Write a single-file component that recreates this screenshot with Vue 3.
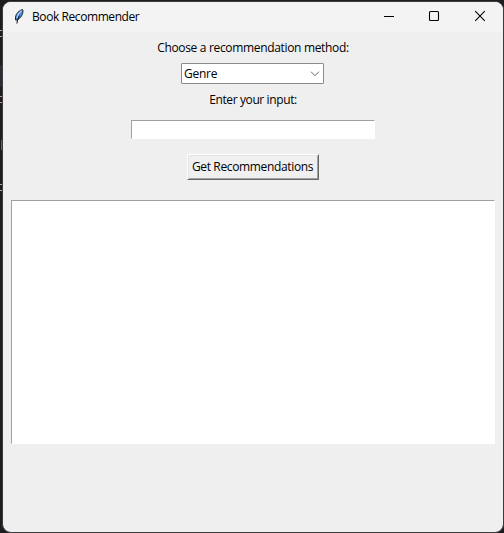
<script setup>
import { ref } from 'vue'

const method = ref('Genre')
const query = ref('')
const results = ref('')
</script>

<template>
  <div class="desktop">
    <div class="editor" aria-hidden="true">
      <i class="line"></i>
      <i class="mark m1"></i>
      <i class="mark m2"></i>
      <i class="mark m3"></i>
      <i class="mark m4"></i>
    </div>
    <main class="window">
      <header class="titlebar">
        <svg class="feather" width="12" height="17" viewBox="0 0 12 17">
          <path d="M9.5 1.5C6 2.5 3 5.5 2.5 9L2.5 12L4.5 12C8 9.5 10 6.5 10 3Z" fill="#4b8fe2" stroke="#25282e" stroke-width="1" />
          <path d="M8.5 2.5C6.2 4.5 4.6 7 3.9 9.8" stroke="#a5cdf8" stroke-width="1.2" fill="none" />
          <path d="M6.6 7.5C5.3 9.5 4.3 12 3.9 15.5" stroke="#101114" stroke-width="1" fill="none" />
        </svg>
        <h1 class="title">Book Recommender</h1>
        <nav class="controls">
          <svg width="46" height="30" viewBox="0 0 46 30"><path d="M18 14.5h10" /></svg>
          <svg width="46" height="30" viewBox="0 0 46 30"><rect x="17.5" y="9.5" width="9" height="9" rx="1" /></svg>
          <svg width="46" height="30" viewBox="0 0 46 30"><path d="M17.2 9.2l9.6 9.6M26.8 9.2l-9.6 9.6" /></svg>
        </nav>
      </header>
      <section class="form">
        <p class="label choose">Choose a recommendation method:</p>
        <div class="combo">
          <span class="genre">{{ method }}</span>
          <svg width="10" height="6" viewBox="0 0 10 6"><path d="M1 .7L5 4.7L9 .7" /></svg>
        </div>
        <p class="label enter">Enter your input:</p>
        <input v-model="query" class="entry" type="text" />
        <button class="submit" type="button"><span>Get Recommendations</span></button>
        <textarea v-model="results" class="results"></textarea>
      </section>
    </main>
  </div>
</template>

<style>
body {
  margin: 0;
}
</style>

<style scoped>
.desktop {
  position: relative;
  box-sizing: border-box;
  width: 504px;
  height: 533px;
  padding: 1px 0 0 2px;
  overflow: hidden;
  background: #1e1c1e;
  color: #000;
  font-family: "Open Sans", "Noto Sans", sans-serif;
  font-size: 12px;
}
.editor {
  position: absolute;
  inset: 0 auto 0 0;
  width: 3px;
}
.mark {
  position: absolute;
  box-sizing: border-box;
  left: 0;
  width: 2px;
  height: 7px;
  border: solid #a9a9ab;
  border-width: 1px 0;
}
.m1 { top: 30px; }
.m2 { top: 96px; border-color: #b99b80; }
.m3 { top: 140px; left: 1px; width: 1px; height: 10px; border: 0; background: #2f7185; }
.m4 { top: 184px; }
.line {
  position: absolute;
  top: 65px;
  left: 0;
  width: 2px;
  height: 22px;
  background: #2d2b34;
}
.window {
  position: relative;
  box-sizing: border-box;
  width: 502px;
  height: 532px;
  overflow: hidden;
  border: 1px solid #3b3b3d;
  border-radius: 9px;
  background: #efefef;
}
.titlebar {
  display: flex;
  height: 30px;
  background: #f3f3f3;
}
.feather {
  margin: 6px 0 0 10px;
}
.title {
  margin: 0 0 0 7px;
  font-size: 12px;
  font-weight: 400;
  line-height: 30px;
  letter-spacing: -0.42px;
  white-space: nowrap;
}
.controls {
  display: flex;
  margin: 0 -1px 0 auto;
}
.controls svg {
  fill: none;
  stroke: #000;
  stroke-width: 1.1;
}
.form {
  display: flex;
  flex-direction: column;
  align-items: center;
}
.label {
  margin: 0;
  line-height: 16px;
  white-space: nowrap;
}
.choose {
  margin-top: 8px;
  letter-spacing: -0.33px;
}
.combo {
  display: flex;
  box-sizing: border-box;
  align-items: center;
  justify-content: space-between;
  width: 143px;
  height: 21px;
  margin: 7px 1px 0 0;
  padding: 0 3px 0 2px;
  border: 1px solid #8b8b8b;
  border-radius: 1px;
  background: #fff;
}
.combo svg {
  fill: none;
  stroke: #666;
}
.genre {
  letter-spacing: -0.25px;
}
.enter {
  margin-top: 8px;
  letter-spacing: -0.38px;
}
.entry,
.results {
  box-sizing: border-box;
  padding: 2px;
  border: 1px solid;
  border-color: #a0a0a0 #fff #fff #a0a0a0;
  border-radius: 0;
  outline: 0;
  background: #fff;
  resize: none;
}
.entry {
  width: 244px;
  height: 19px;
  margin: 12px 0 0;
}
.submit {
  display: flex;
  box-sizing: border-box;
  align-items: center;
  justify-content: center;
  width: 132px;
  height: 26px;
  margin: 15px 0 0;
  padding: 0 1px 2px 0;
  border: 1px solid;
  border-color: #fff #696969 #696969 #fff;
  background: #f0f0f0;
  box-shadow: inset 1px 1px #e3e3e3, inset -1px -1px #a0a0a0;
  color: #000;
  font: inherit;
  letter-spacing: -0.35px;
  white-space: nowrap;
}
.results {
  width: 484px;
  height: 244px;
  margin: 20px 0 0;
}
</style>
